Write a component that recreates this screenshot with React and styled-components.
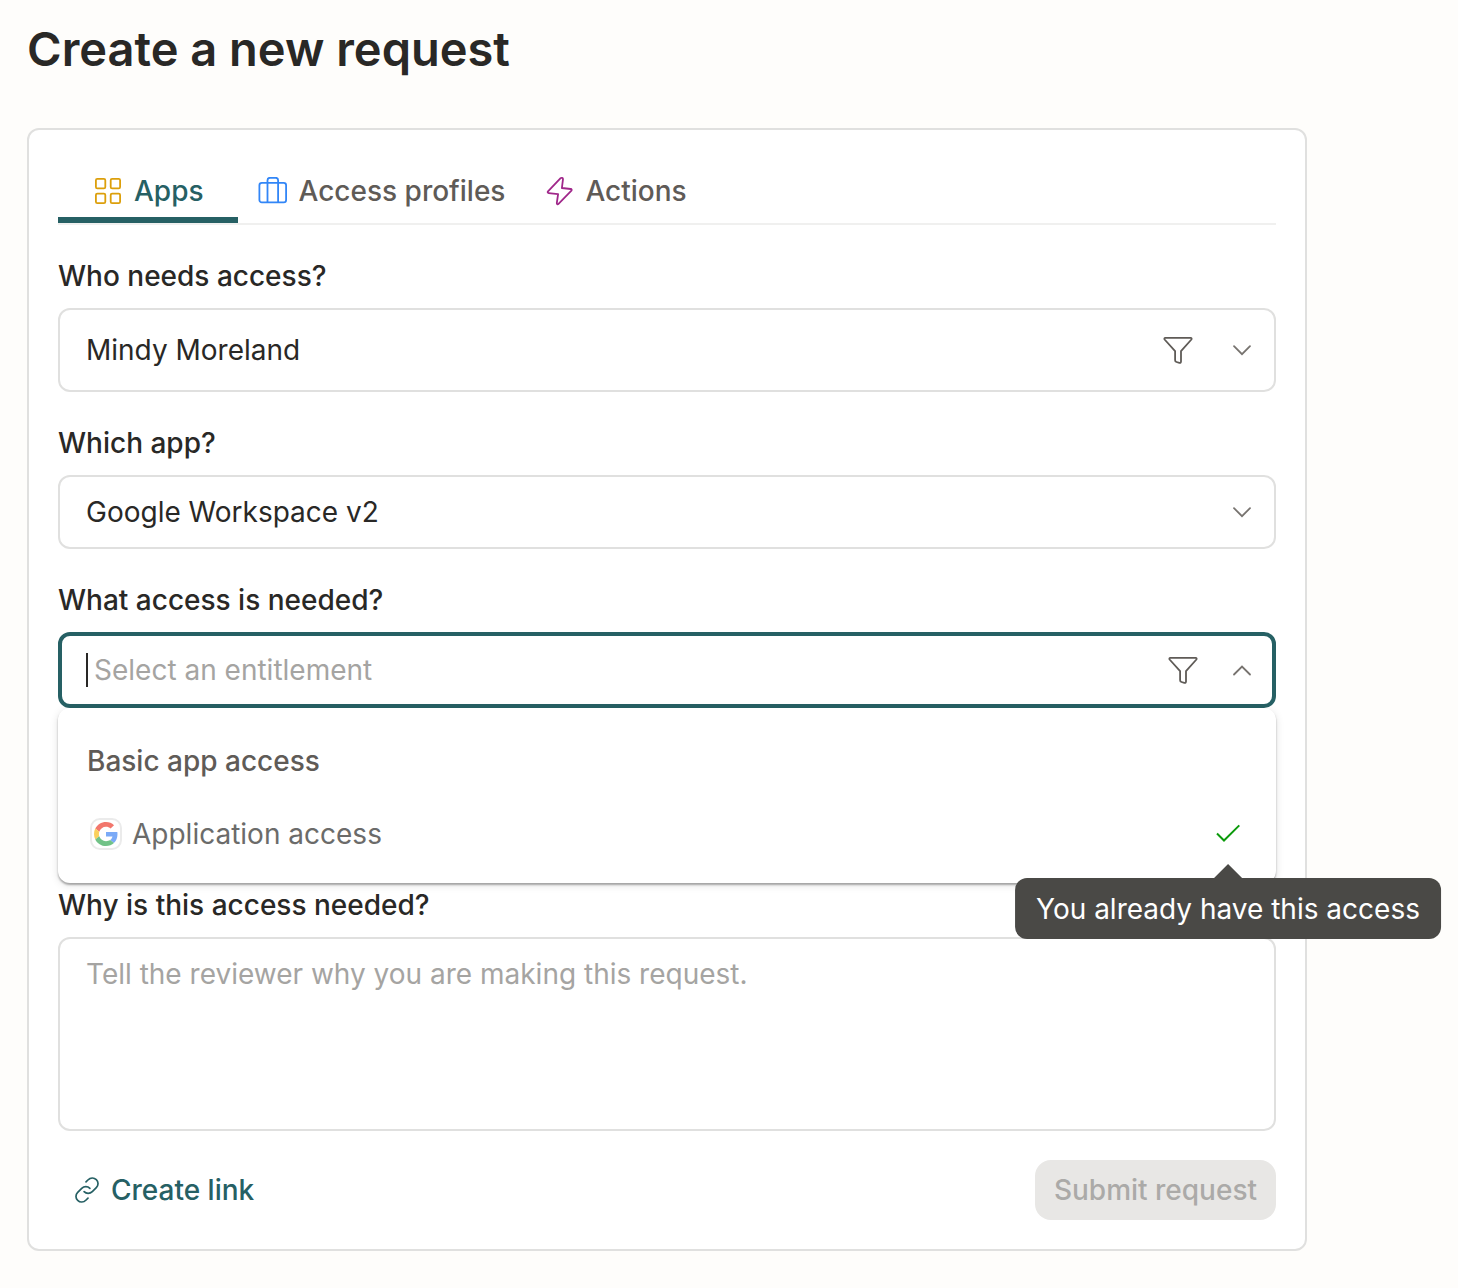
import React, { useState } from 'react';
import styled, { createGlobalStyle } from 'styled-components';

const GlobalStyle = createGlobalStyle`
  * {
    box-sizing: border-box;
  }

  body {
    margin: 0;
    background: #fefdfb;
    color: #292826;
    font-family: Inter, "Liberation Sans", sans-serif;
    font-size: 28px;
    line-height: 44px;
    -webkit-font-smoothing: antialiased;
  }

  button,
  input,
  select,
  textarea {
    font: inherit;
    color: inherit;
  }
`;

const AppsIcon = () => (
  <svg width="28" height="28" viewBox="0 0 28 28" fill="none" stroke="#dc9f0b" strokeWidth="1.8" aria-hidden="true">
    <rect x="1.9" y="1.9" width="9.4" height="9.4" rx="1.4" />
    <rect x="16.7" y="1.9" width="9.4" height="9.4" rx="1.4" />
    <rect x="1.9" y="16.7" width="9.4" height="9.4" rx="1.4" />
    <rect x="16.7" y="16.7" width="9.4" height="9.4" rx="1.4" />
  </svg>
);

const BriefcaseIcon = () => (
  <svg width="29" height="28" viewBox="0 0 29 28" fill="none" stroke="#3286f7" strokeWidth="1.8" aria-hidden="true">
    <rect x="1.4" y="5.9" width="26.7" height="19.4" rx="2.4" />
    <path d="M9.5 25.3V3.2a2.4 2.4 0 0 1 2.4-2.4h5.8a2.4 2.4 0 0 1 2.4 2.4v22.1" />
  </svg>
);

const BoltIcon = () => (
  <svg width="28" height="30" viewBox="-1 0 28 30" fill="none" stroke="#a0278a" strokeWidth="1.8" strokeLinejoin="round" aria-hidden="true">
    <path d="M14.6 2.2 2 15.3c-.7.8-.3 1.7.7 1.8l9.4 1-1.3 9c-.1 1.2.9 1.6 1.7.8L25.4 14.7c.6-.7.3-1.6-.7-1.7l-8.8-1 1.1-8.9c.1-1.2-1.5-1.7-2.4-.9Z" />
  </svg>
);

const FunnelIcon = () => (
  <svg width="30" height="30" viewBox="0 0 30 30" fill="none" stroke="#5f5b57" strokeWidth="1.8" strokeLinejoin="round" aria-hidden="true">
    <path d="M2.3 2.9h25.4c.9 0 1.2.8.7 1.6L18 16.1v10.500c0 1-.7 1.500-1.600 1.300l-2.900-.9c-.9-.3-1.400-.9-1.400-1.800v-9.100L1.600 4.500c-.5-.8-.2-1.600.7-1.600Z" />
  </svg>
);

const ChevronIcon = ({ up }) => (
  <svg width="20" height="12" viewBox="0 0 20 12" fill="none" stroke="#77736f" strokeWidth="1.8" strokeLinecap="round" aria-hidden="true">
    <path d={up ? 'M2 10.5l8-8 8 8' : 'M2 2.2l8 8 8-8'} />
  </svg>
);

const CheckIcon = () => (
  <svg width="28" height="28" viewBox="0 0 28 28" fill="none" stroke="#0b9a0b" strokeWidth="2" aria-hidden="true">
    <path d="M3 13.5l7 7L25.3 5.4" />
  </svg>
);

const LinkIcon = () => (
  <svg width="28" height="28" viewBox="0 0 28 28" fill="none" stroke="#266064" strokeWidth="1.7" strokeLinecap="round" aria-hidden="true">
    <path d="M13 5.9l1.9-1.9c2.6-2.6 6.1-2.6 8.4-.4s2.3 5.8 0 8.1l-4 4c-2.4 2.3-6 2.3-8.2 0" />
    <path d="M15 22.1l-1.9 1.9c-2.6 2.6-6.1 2.6-8.4.4s-2.3-5.8 0-8.1l4-4c2.4-2.3 6-2.3 8.2 0" />
  </svg>
);

const GoogleIcon = () => (
  <svg width="24" height="24" viewBox="0 0 48 48" aria-hidden="true">
    <path fill="#f2776d" d="M24 9.5c3.54 0 6.71 1.22 9.21 3.6l6.85-6.85C35.9 2.38 30.47 0 24 0 14.62 0 6.51 5.38 2.56 13.22l7.98 6.19C12.43 13.72 17.74 9.5 24 9.5z" />
    <path fill="#7baaf7" d="M46.98 24.55c0-1.57-.15-3.09-.38-4.55H24v9.02h12.94c-.58 2.96-2.26 5.48-4.78 7.18l7.73 6c4.51-4.18 7.09-10.36 7.09-17.65z" />
    <path fill="#fbd05b" d="M10.53 28.59c-.48-1.45-.76-2.99-.76-4.59s.27-3.14.76-4.59l-7.98-6.19C.92 16.46 0 20.12 0 24c0 3.88.92 7.54 2.56 10.78l7.97-6.19z" />
    <path fill="#71c287" d="M24 48c6.48 0 11.93-2.13 15.89-5.81l-7.73-6c-2.15 1.45-4.92 2.3-8.16 2.3-6.26 0-11.57-4.22-13.47-9.91l-7.98 6.19C6.51 42.62 14.62 48 24 48z" />
  </svg>
);

const TABS = [
  { id: 'apps', label: 'Apps', icon: AppsIcon },
  { id: 'profiles', label: 'Access profiles', icon: BriefcaseIcon },
  { id: 'actions', label: 'Actions', icon: BoltIcon },
];

const App = () => {
  const [tab, setTab] = useState('apps');
  const [entitlement, setEntitlement] = useState('');
  const [reason, setReason] = useState('');

  return (
    <>
      <GlobalStyle />
      <Page>
        <Title>Create a new request</Title>
        <Card onSubmit={(e) => e.preventDefault()}>
          <Tabs role="tablist">
            {TABS.map(({ id, label, icon: Icon }) => (
              <Tab
                key={id}
                type="button"
                role="tab"
                aria-selected={tab === id}
                $active={tab === id}
                onClick={() => setTab(id)}
              >
                <Icon />
                {label}
              </Tab>
            ))}
          </Tabs>

          <Field>
            <Label htmlFor="who">Who needs access?</Label>
            <Control $height={84}>
              <Select id="who" defaultValue="mindy">
                <option value="mindy">Mindy Moreland</option>
              </Select>
              <IconButton type="button" aria-label="Filter people" $gap={39}>
                <FunnelIcon />
              </IconButton>
              <ChevronIcon />
            </Control>
          </Field>

          <Field>
            <Label htmlFor="app">Which app?</Label>
            <Control $height={74}>
              <Select id="app" defaultValue="google">
                <option value="google">Google Workspace v2</option>
              </Select>
              <ChevronIcon />
            </Control>
          </Field>

          <Field $open>
            <Label htmlFor="entitlement">What access is needed?</Label>
            <Control $height={76} $focused>
              <Caret />
              <TextInput
                id="entitlement"
                role="combobox"
                aria-expanded="true"
                aria-controls="entitlement-menu"
                placeholder="Select an entitlement"
                value={entitlement}
                onChange={(e) => setEntitlement(e.target.value)}
              />
              <IconButton type="button" aria-label="Filter entitlements" $gap={34}>
                <FunnelIcon />
              </IconButton>
              <ChevronIcon up />
            </Control>
            <Menu id="entitlement-menu" role="listbox">
              <Option role="option" aria-selected="false">
                Basic app access
              </Option>
              <Option role="option" aria-selected="false" aria-disabled="true" $muted>
                <AppBadge>
                  <GoogleIcon />
                </AppBadge>
                <OptionText>Application access</OptionText>
                <Granted>
                  <CheckIcon />
                  <Tooltip role="tooltip">You already have this access</Tooltip>
                </Granted>
              </Option>
            </Menu>
          </Field>

          <Field>
            <Label htmlFor="reason">Why is this access needed?</Label>
            <TextArea
              id="reason"
              placeholder="Tell the reviewer why you are making this request."
              value={reason}
              onChange={(e) => setReason(e.target.value)}
            />
          </Field>

          <Footer>
            <LinkButton type="button">
              <LinkIcon />
              Create link
            </LinkButton>
            <SubmitButton type="submit" disabled>
              Submit request
            </SubmitButton>
          </Footer>
        </Card>
      </Page>
    </>
  );
};

const Page = styled.main`
  max-width: 1334px;
  padding: 19px 27px 36px;
`;

const Title = styled.h1`
  margin: 0 0 49px;
  font-size: 47px;
  font-weight: 600;
  line-height: 60px;
`;

const Card = styled.form`
  padding: 29px;
  background: #fff;
  border: 2px solid #e0e0df;
  border-radius: 12px;
`;

const Tabs = styled.div`
  display: flex;
  margin-bottom: 29px;
  border-bottom: 2px solid #f0f0ef;
`;

const Tab = styled.button`
  display: flex;
  align-items: center;
  gap: 12px;
  height: 64px;
  padding: ${({ $active }) => ($active ? '0 34px 0 36px' : '0 20px')};
  background: none;
  border: none;
  box-shadow: ${({ $active }) => ($active ? 'inset 0 -6px #266064' : 'none')};
  color: ${({ $active }) => ($active ? '#266064' : '#5f5b57')};
  font-weight: 500;
  white-space: nowrap;
  cursor: pointer;
`;

const Field = styled.div`
  display: flex;
  flex-direction: column;
  margin-bottom: ${({ $open }) => ($open ? '0' : '29px')};
`;

const Label = styled.label`
  margin-bottom: 10px;
  font-weight: 500;
`;

const Control = styled.div`
  display: flex;
  align-items: center;
  height: ${({ $height }) => $height}px;
  padding: 0 ${({ $focused }) => ($focused ? '20px 0 24px' : '22px 0 26px')};
  background: #fff;
  border: ${({ $focused }) => ($focused ? '4px solid #266064' : '2px solid #e0e0df')};
  border-radius: 12px;
`;

const Select = styled.select`
  flex: 1;
  min-width: 0;
  padding: 0;
  appearance: none;
  background: none;
  border: none;
  outline: none;
`;

const Caret = styled.span`
  width: 2px;
  height: 34px;
  margin-right: 6px;
  background: #292826;
`;

const TextInput = styled.input`
  flex: 1;
  min-width: 0;
  padding: 0;
  background: none;
  border: none;
  outline: none;
  caret-color: transparent;

  &::placeholder {
    color: #a5a4a2;
    opacity: 1;
  }
`;

const IconButton = styled.button`
  display: flex;
  margin-right: ${({ $gap }) => $gap}px;
  padding: 0;
  background: none;
  border: none;
  cursor: pointer;
`;

const Menu = styled.ul`
  margin: 0;
  padding: 16px 0 13px;
  list-style: none;
  background: #fff;
  border-radius: 12px;
  box-shadow: 0 2px 2px rgba(0, 0, 0, 0.3), 0 2px 8px rgba(0, 0, 0, 0.12);
`;

const Option = styled.li`
  display: flex;
  align-items: center;
  height: 73px;
  padding: 0 34px 0 29px;
  color: ${({ $muted }) => ($muted ? '#6b6b6a' : '#5f5b57')};
  font-weight: ${({ $muted }) => ($muted ? 400 : 500)};
  cursor: pointer;
`;

const OptionText = styled.span`
  flex: 1;
`;

const AppBadge = styled.span`
  display: flex;
  align-items: center;
  justify-content: center;
  width: 32px;
  height: 32px;
  margin: 0 10px 0 3px;
  border: 2px solid #ebebeb;
  border-radius: 10px;
`;

const Granted = styled.span`
  position: relative;
  display: flex;
`;

const Tooltip = styled.span`
  position: absolute;
  top: 58px;
  left: 50%;
  transform: translateX(-50%);
  padding: 9px 21px 8px;
  background: #4a4946;
  border-radius: 12px;
  color: #fff;
  font-weight: 400;
  white-space: nowrap;

  &::before {
    content: '';
    position: absolute;
    bottom: 100%;
    left: 50%;
    margin-left: -14px;
    border: 14px solid transparent;
    border-top: none;
    border-bottom-color: #4a4946;
  }
`;

const TextArea = styled.textarea`
  height: 194px;
  padding: 13px 26px;
  background: #fff;
  border: 2px solid #e0e0df;
  border-radius: 12px;
  outline: none;
  resize: none;

  &::placeholder {
    color: #a5a4a2;
    opacity: 1;
  }
`;

const Footer = styled.div`
  display: flex;
  align-items: center;
  justify-content: space-between;
`;

const LinkButton = styled.button`
  display: flex;
  align-items: center;
  gap: 10px;
  padding: 0 15px;
  background: none;
  border: none;
  color: #266064;
  font-weight: 500;
  cursor: pointer;
`;

const SubmitButton = styled.button`
  height: 60px;
  padding: 0 19px;
  background: #e8e7e5;
  border: none;
  border-radius: 16px;
  color: #abaaa8;
  font-weight: 500;
`;

export default App;
